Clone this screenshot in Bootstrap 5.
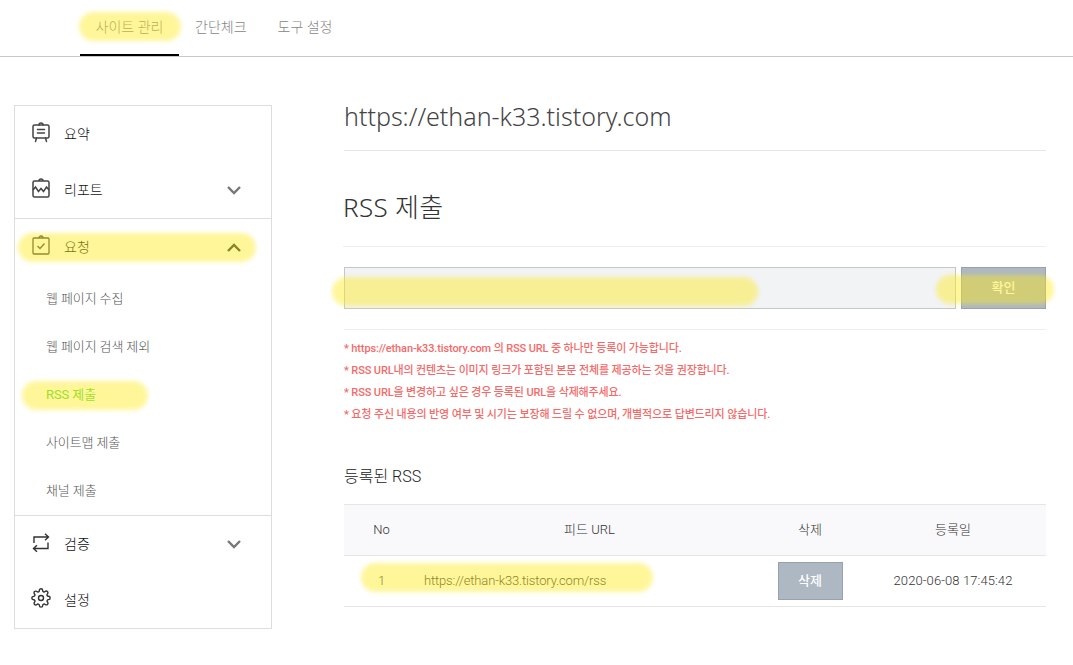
<!DOCTYPE html>
<html lang="ko">
<head>
  <meta charset="UTF-8" />
  <meta name="viewport" content="width=device-width, initial-scale=1" />
  <title>RSS 제출</title>
  <link href="https://cdn.jsdelivr.net/npm/bootstrap@5.3.0/dist/css/bootstrap.min.css" rel="stylesheet" />
  <style>
    body {
      font-family: Roboto, "Noto Sans CJK KR", sans-serif;
      color: #222;
      background: #fff;
      min-height: 665px;
      position: relative;
      overflow: hidden;
    }
    .top-bar { height: 57px; border-bottom: 1px solid #c8c8c8; padding-left: 80px; }
    .top-tab {
      height: 56px; line-height: 55px; font-size: 14px; font-weight: 300; color: #858585;
      text-decoration: none; text-align: center; margin-right: 31px;
    }
    .top-tab.on { width: 99px; margin-right: 16px; border-bottom: 2px solid #000; }
    .page-wrap { padding: 48px 27px 0 14px; gap: 72px; }
    .side-box { width: 258px; height: 524px; flex: none; border: 1px solid #ddd; }
    .side-group + .side-group { border-top: 1px solid #ddd; }
    .side-item { height: 56px; padding: 0 30px 0 16px; font-size: 14px; font-weight: 300; color: #111; text-decoration: none; }
    .side-item .label { margin-left: 13px; flex: 1; }
    .side-item svg.ico { width: 20px; height: 22px; flex: none; overflow: visible; }
    .side-sub { display: block; height: 48px; line-height: 48px; padding-left: 31px; font-size: 13px; font-weight: 300; color: #555; text-decoration: none; letter-spacing: -.1px; }
    .side-sub.on { color: #54d63a; font-weight: 400; }
    .main-col { flex: 1; min-width: 0; }
    .site-title { height: 46px; margin: 0; font-family: "Noto Sans", "Noto Sans CJK KR", sans-serif; font-size: 25px; font-weight: 300; line-height: 22px; color: #444; border-bottom: 1px solid #e6e6e6; }
    .sec-title { height: 96px; padding-top: 40px; margin: 0 0 0 -1px; font-family: "Noto Sans", "Noto Sans CJK KR", sans-serif; font-size: 26px; font-weight: 300; line-height: 32px; letter-spacing: .3px; color: #333; border-bottom: 1px solid #eee; }
    .rss-form { gap: 5px; margin-top: 20px; height: 42px; }
    .rss-input { flex: 1; height: 42px; background: #f2f3f5; border: 1px solid #c3c7cc; border-radius: 0; }
    .rss-btn, .del-btn {
      border-radius: 0; background: #aeb8c2; border: 1px solid #98a2ac; color: #fff;
      font-size: 13px; font-weight: 500; padding: 0;
    }
    .rss-btn { width: 85px; height: 42px; }
    .del-btn { width: 65px; height: 38px; }
    .note-box { margin-top: 20px; padding-top: 8px; border-top: 1px solid #eee; }
    .note-box p { margin: 0; height: 22px; line-height: 22px; font-size: 11px; font-weight: 500; color: #f46a69; white-space: nowrap; letter-spacing: -.13px; }
    .list-title { margin: 36px 0 0; height: 29px; font-size: 16px; font-weight: 300; line-height: 29px; color: #222; }
    .rss-table { width: 100%; margin: 13px 0 0; table-layout: fixed; font-size: 13px; color: #333; }
    .rss-table th, .rss-table td { text-align: center; vertical-align: middle; padding: 0; font-weight: 300; border-bottom: 1px solid #e6e6e6; }
    .rss-table th { height: 51px; background: #f9f9fb; border-top: 1px solid #e6e6e6; }
    .rss-table td { height: 51px; }
    .rss-table td.url-cell { text-align: left; padding-left: 5px; letter-spacing: -.15px; }
    .rss-table td.date-cell { letter-spacing: .1px; }
    .rss-table th:nth-child(1) { width: 75px; }
    .rss-table th:nth-child(2) { width: 341px; }
    .rss-table th:nth-child(3) { width: 100px; }
    .hl {
      position: absolute; height: 29px; border-radius: 15px; background: rgba(255, 233, 20, .43);
      filter: blur(2px);
    }
    .hl-tab { left: 79px; top: 12px; width: 102px; }
    .hl-menu { left: 18px; top: 233px; width: 238px; }
    .hl-sub { left: 22px; top: 381px; width: 126px; }
    .hl-input { left: 332px; top: 277px; width: 426px; }
    .hl-btn { left: 936px; top: 275px; width: 118px; }
    .hl-row { left: 361px; top: 563px; width: 292px; }
  </style>
</head>
<body>
  <!-- top tabs -->
  <nav class="top-bar d-flex">
    <a class="top-tab on" href="#">사이트 관리</a>
    <a class="top-tab" href="#">간단체크</a>
    <a class="top-tab" href="#">도구 설정</a>
  </nav>

  <div class="page-wrap d-flex">
    <!-- side menu -->
    <aside class="side-box">
      <div class="side-group">
        <a class="side-item d-flex align-items-center" href="#">
          <svg class="ico" viewBox="0 0 20 22" fill="none" stroke="#444" stroke-width="1.5" stroke-linecap="round"><rect x="2" y="2" width="16" height="13" rx="1.5"/><path d="M8 2a2 2 0 0 1 4 0M6.500 6.500h7M6.500 10h7M5.500 15l-1 3.500M14.500 15l1 3.500"/></svg>
          <span class="label">요약</span>
        </a>
        <a class="side-item d-flex align-items-center" href="#">
          <svg class="ico" viewBox="0 0 20 22" fill="none" stroke="#444" stroke-width="1.5"><rect x="2" y="2" width="16" height="16" rx="1.5"/><path d="M8 2a2 2 0 0 1 4 0M2 11l2.500-3 3 4.500 2.500-3 2.500 3 3-4.500 2.500 3"/></svg>
          <span class="label">리포트</span>
          <svg width="14" height="9" viewBox="0 0 14 9" fill="none" stroke="#777" stroke-width="2.4"><path d="M1 1l6 6 6-6"/></svg>
        </a>
      </div>
      <div class="side-group">
        <a class="side-item d-flex align-items-center" href="#">
          <svg class="ico" viewBox="0 0 20 22" fill="none" stroke="#444" stroke-width="1.3"><rect x="2" y="2" width="16" height="16" rx="1"/><path d="M8 2a2 2 0 0 1 4 0M6.500 10l2.500 2.500 4.500-5"/></svg>
          <span class="label">요청</span>
          <svg width="14" height="9" viewBox="0 0 14 9" fill="none" stroke="#333" stroke-width="2.4"><path d="M1 8l6-6 6 6"/></svg>
        </a>
        <a class="side-sub" href="#">웹 페이지 수집</a>
        <a class="side-sub" href="#">웹 페이지 검색 제외</a>
        <a class="side-sub on" href="#">RSS 제출</a>
        <a class="side-sub" href="#">사이트맵 제출</a>
        <a class="side-sub" href="#">채널 제출</a>
      </div>
      <div class="side-group">
        <a class="side-item d-flex align-items-center" href="#">
          <svg class="ico" viewBox="0 0 20 22" fill="none" stroke="#333" stroke-width="1.4"><path d="M3 10V4h14.500M14 .8l3.500 3.200L14 7.200M17 9.500v6H2.500M6 12.300l-3.500 3.200L6 18.700"/></svg>
          <span class="label">검증</span>
          <svg width="14" height="9" viewBox="0 0 14 9" fill="none" stroke="#777" stroke-width="2.4"><path d="M1 1l6 6 6-6"/></svg>
        </a>
        <a class="side-item d-flex align-items-center" href="#">
          <svg class="ico" viewBox="0 0 20 22" fill="none" stroke="#333" stroke-width="1.7" stroke-linejoin="round"><g transform="translate(0 -1) scale(.833)"><circle cx="12" cy="12" r="3"/><path d="M19.400 15a1.650 1.650 0 0 0 .33 1.820l.06.06a2 2 0 0 1 0 2.830 2 2 0 0 1-2.830 0l-.06-.06a1.650 1.650 0 0 0-1.820-.33 1.650 1.650 0 0 0-1 1.510V21a2 2 0 0 1-2 2 2 2 0 0 1-2-2v-.09A1.650 1.650 0 0 0 9 19.400a1.650 1.650 0 0 0-1.820.33l-.06.06a2 2 0 0 1-2.830 0 2 2 0 0 1 0-2.830l.06-.06a1.650 1.650 0 0 0 .33-1.820 1.650 1.650 0 0 0-1.510-1H3a2 2 0 0 1-2-2 2 2 0 0 1 2-2h.09A1.650 1.650 0 0 0 4.600 9a1.650 1.650 0 0 0-.33-1.820l-.06-.06a2 2 0 0 1 0-2.830 2 2 0 0 1 2.830 0l.06.06a1.650 1.650 0 0 0 1.820.33H9a1.650 1.650 0 0 0 1-1.510V3a2 2 0 0 1 2-2 2 2 0 0 1 2 2v.09a1.650 1.650 0 0 0 1 1.510 1.650 1.650 0 0 0 1.820-.33l.06-.06a2 2 0 0 1 2.830 0 2 2 0 0 1 0 2.830l-.06.06a1.650 1.650 0 0 0-.33 1.820V9a1.650 1.650 0 0 0 1.510 1H21a2 2 0 0 1 2 2 2 2 0 0 1-2 2h-.09a1.650 1.650 0 0 0-1.510 1z"/></g></svg>
          <span class="label">설정</span>
        </a>
      </div>
    </aside>

    <!-- main content -->
    <main class="main-col">
      <h1 class="site-title">https://ethan-k33.tistory.com</h1>
      <h2 class="sec-title">RSS 제출</h2>
      <form class="rss-form d-flex">
        <input class="rss-input form-control" type="text" />
        <button class="rss-btn btn" type="button">확인</button>
      </form>
      <div class="note-box">
        <p>* https://ethan-k33.tistory.com 의 RSS URL 중 하나만 등록이 가능합니다.</p>
        <p>* RSS URL내의 컨텐츠는 이미지 링크가 포함된 본문 전체를 제공하는 것을 권장합니다.</p>
        <p>* RSS URL을 변경하고 싶은 경우 등록된 URL을 삭제해주세요.</p>
        <p>* 요청 주신 내용의 반영 여부 및 시기는 보장해 드릴 수 없으며, 개별적으로 답변드리지 않습니다.</p>
      </div>
      <h3 class="list-title">등록된 RSS</h3>
      <table class="rss-table">
        <thead><tr><th>No</th><th>피드 URL</th><th>삭제</th><th>등록일</th></tr></thead>
        <tbody><tr>
          <td>1</td><td class="url-cell">https://ethan-k33.tistory.com/rss</td>
          <td><button class="del-btn btn" type="button">삭제</button></td>
          <td class="date-cell">2020-06-08 17:45:42</td>
        </tr></tbody>
      </table>
    </main>
  </div>

  <!-- highlighter marks drawn over the screenshot -->
  <div class="hl hl-tab"></div>
  <div class="hl hl-menu"></div>
  <div class="hl hl-sub"></div>
  <div class="hl hl-input"></div>
  <div class="hl hl-btn"></div>
  <div class="hl hl-row"></div>
  <script src="https://cdn.jsdelivr.net/npm/bootstrap@5.3.0/dist/js/bootstrap.bundle.min.js"></script>
</body>
</html>
